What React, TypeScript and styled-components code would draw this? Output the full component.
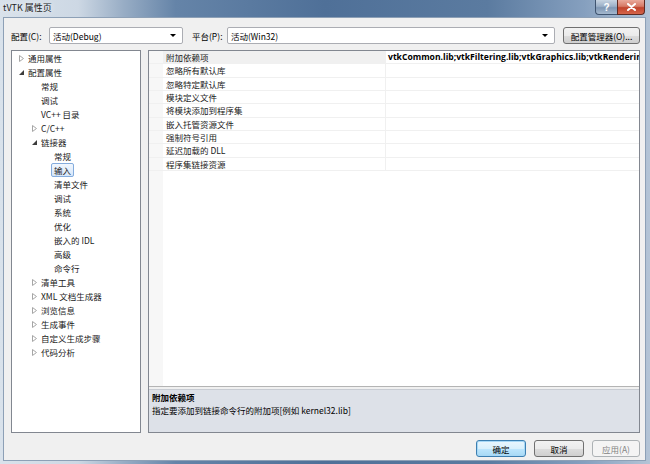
import React from "react";
import styled, { createGlobalStyle, css } from "styled-components";

const GlobalStyle = createGlobalStyle`
  html, body {
    margin: 0;
    padding: 0;
    background: #ffffff;
  }
  * {
    box-sizing: border-box;
  }
`;

const uiFont = `"Noto Sans CJK SC", "Noto Sans", sans-serif`;

type TreeItem = {
  label: string;
  level: number;
  arrow?: "collapsed" | "expanded";
  selected?: boolean;
};

const treeItems: TreeItem[] = [
  { label: "通用属性", level: 0, arrow: "collapsed" },
  { label: "配置属性", level: 0, arrow: "expanded" },
  { label: "常规", level: 1 },
  { label: "调试", level: 1 },
  { label: "VC++ 目录", level: 1 },
  { label: "C/C++", level: 1, arrow: "collapsed" },
  { label: "链接器", level: 1, arrow: "expanded" },
  { label: "常规", level: 2 },
  { label: "输入", level: 2, selected: true },
  { label: "清单文件", level: 2 },
  { label: "调试", level: 2 },
  { label: "系统", level: 2 },
  { label: "优化", level: 2 },
  { label: "嵌入的 IDL", level: 2 },
  { label: "高级", level: 2 },
  { label: "命令行", level: 2 },
  { label: "清单工具", level: 1, arrow: "collapsed" },
  { label: "XML 文档生成器", level: 1, arrow: "collapsed" },
  { label: "浏览信息", level: 1, arrow: "collapsed" },
  { label: "生成事件", level: 1, arrow: "collapsed" },
  { label: "自定义生成步骤", level: 1, arrow: "collapsed" },
  { label: "代码分析", level: 1, arrow: "collapsed" },
];

const properties = [
  { name: "附加依赖项", value: "vtkCommon.lib;vtkFiltering.lib;vtkGraphics.lib;vtkRendering.lib;vtkIO.lib" },
  { name: "忽略所有默认库", value: "" },
  { name: "忽略特定默认库", value: "" },
  { name: "模块定义文件", value: "" },
  { name: "将模块添加到程序集", value: "" },
  { name: "嵌入托管资源文件", value: "" },
  { name: "强制符号引用", value: "" },
  { name: "延迟加载的 DLL", value: "" },
  { name: "程序集链接资源", value: "" },
];

function App() {
  return (
    <>
      <GlobalStyle />
      <Window>
        <TitleBar>
          <TitleText>tVTK 属性页</TitleText>
          <CaptionButtons>
            <HelpButton>?</HelpButton>
            <CloseButton>
              <svg width="9" height="8" viewBox="0 0 9 8">
                <path d="M1 1 L8 7 M8 1 L1 7" stroke="#ffffff" strokeWidth="2" strokeLinecap="round" />
              </svg>
            </CloseButton>
          </CaptionButtons>
        </TitleBar>

        <Body>
          <Toolbar>
            <FieldLabel width={38}>配置(C):</FieldLabel>
            <Combo width={134}>
              <span>活动(Debug)</span>
              <ComboArrow />
            </Combo>
            <FieldLabel width={35} $gap={9}>平台(P):</FieldLabel>
            <Combo grow>
              <span>活动(Win32)</span>
              <ComboArrow />
            </Combo>
            <ToolButton>配置管理器(O)...</ToolButton>
          </Toolbar>

          <Main>
            <Tree>
              {treeItems.map((item, i) => (
                <TreeRow key={i} level={item.level}>
                  <ArrowBox>
                    {item.arrow === "collapsed" && (
                      <svg width="5" height="7" viewBox="0 0 5 7">
                        <path d="M0.5 0.5 L4.5 3.5 L0.5 6.5 Z" fill="none" stroke="#a6a6a6" strokeWidth="1" />
                      </svg>
                    )}
                    {item.arrow === "expanded" && (
                      <svg width="5" height="5" viewBox="0 0 5 5">
                        <path d="M5 0 L5 5 L0 5 Z" fill="#3c3c3c" />
                      </svg>
                    )}
                  </ArrowBox>
                  <TreeLabel selected={item.selected}>{item.label}</TreeLabel>
                </TreeRow>
              ))}
            </Tree>

            <PropertyPanel>
              <Grid>
                {properties.map((p, i) => (
                  <GridRow key={i}>
                    <Gutter />
                    <NameCell active={i === 0}>{p.name}</NameCell>
                    <ValueCell>{p.value}</ValueCell>
                  </GridRow>
                ))}
                <GridFill>
                  <Gutter />
                </GridFill>
              </Grid>
              <Splitter />
              <Description>
                <DescTitle>附加依赖项</DescTitle>
                <DescText>指定要添加到链接命令行的附加项[例如 kernel32.lib]</DescText>
              </Description>
            </PropertyPanel>
          </Main>

          <Footer>
            <DialogButton variant="default">确定</DialogButton>
            <DialogButton>取消</DialogButton>
            <DialogButton variant="disabled" width={48}>应用(A)</DialogButton>
          </Footer>
        </Body>
      </Window>
    </>
  );
}

export default App;

const Window = styled.div`
  width: 650px;
  height: 464px;
  display: flex;
  flex-direction: column;
  padding: 0 4px 3px 3px;
  background: linear-gradient(
    to right,
    #d9e2eb 0%,
    #cdd8e4 12%,
    #98adc5 19%,
    #6584a8 27%,
    #4f7098 50%,
    #5b7ba0 75%,
    #86a0bf 90%,
    #b4c4d6 100%
  );
  font-family: ${uiFont};
  overflow: hidden;
`;

const TitleBar = styled.div`
  height: 17px;
  flex-shrink: 0;
  display: flex;
  align-items: flex-start;
`;

const TitleText = styled.div`
  font-size: 9px;
  line-height: 16px;
  color: #1e1e1e;
  text-shadow: 0 0 6px rgba(255, 255, 255, 0.9);
`;

const CaptionButtons = styled.div`
  margin-left: auto;
  margin-right: 1px;
  display: flex;
`;

const captionBase = css`
  height: 15px;
  display: flex;
  align-items: center;
  justify-content: center;
  border: 1px solid #3f5470;
  border-top: none;
  color: #ffffff;
  font-size: 10px;
  font-weight: bold;
  font-family: "Liberation Sans", sans-serif;
`;

const HelpButton = styled.div`
  ${captionBase};
  width: 22px;
  border-right: none;
  border-bottom-left-radius: 4px;
  background: linear-gradient(#c6d3e1 0%, #9cb0c7 45%, #7f97b4 55%, #a4b8ce 100%);
`;

const CloseButton = styled.div`
  ${captionBase};
  width: 28px;
  border-color: #5e2a22;
  border-bottom-right-radius: 4px;
  background: linear-gradient(#e9a99b 0%, #d67a66 45%, #c0432c 55%, #d5654a 100%);
`;

const Body = styled.div`
  flex: 1;
  display: flex;
  flex-direction: column;
  background: #f0f0f0;
  border: 1px solid #8da0b6;
  padding: 9px 5px 3px 7px;
  min-height: 0;
`;

const Toolbar = styled.div`
  height: 17px;
  display: flex;
  align-items: center;
  flex-shrink: 0;
`;

const FieldLabel = styled.div<{ width: number; $gap?: number }>`
  width: ${({ width }) => width}px;
  margin-left: ${({ $gap }) => $gap || 0}px;
  flex-shrink: 0;
  font-size: 8.5px;
  color: #000000;
  white-space: nowrap;
`;

const Combo = styled.div<{ width?: number; grow?: boolean }>`
  width: ${({ width }) => (width ? `${width}px` : "auto")};
  flex: ${({ grow }) => (grow ? "1" : "none")};
  height: 17px;
  display: flex;
  align-items: center;
  padding: 0 6px 0 3px;
  background: #ffffff;
  border: 1px solid #abadb3;
  border-radius: 2px;
  font-size: 8.5px;
  color: #000000;
`;

const ComboArrow = styled.span`
  margin-left: auto;
  width: 0;
  height: 0;
  border-left: 3px solid transparent;
  border-right: 3px solid transparent;
  border-top: 3px solid #000000;
`;

const ToolButton = styled.div`
  width: 77px;
  height: 17px;
  margin-left: 8px;
  flex-shrink: 0;
  display: flex;
  align-items: center;
  justify-content: center;
  font-size: 8.5px;
  color: #000000;
  border: 1px solid #707070;
  border-radius: 3px;
  background: linear-gradient(#f2f2f2 0%, #ebebeb 50%, #dddddd 51%, #cfcfcf 100%);
  white-space: nowrap;
`;

const Main = styled.div`
  flex: 1;
  display: flex;
  gap: 7px;
  margin-top: 6px;
  min-height: 0;
`;

const Tree = styled.div`
  width: 130px;
  flex-shrink: 0;
  background: #ffffff;
  border: 1px solid #828790;
  overflow: hidden;
`;

const TreeRow = styled.div<{ level: number }>`
  height: 14px;
  display: flex;
  align-items: center;
  padding-left: ${({ level }) => 7 + level * 13}px;
`;

const ArrowBox = styled.span`
  width: 6px;
  height: 14px;
  display: flex;
  align-items: center;
  justify-content: flex-start;
  flex-shrink: 0;
`;

const TreeLabel = styled.span<{ selected?: boolean }>`
  font-size: 8.5px;
  line-height: 12px;
  height: 14px;
  padding: 0 2px;
  border: 1px solid transparent;
  border-radius: 2px;
  color: #1a1a1a;
  white-space: nowrap;
  ${({ selected }) =>
    selected &&
    css`
      border-color: #84acdd;
      background: linear-gradient(#f1f7fe 0%, #d5e6fa 100%);
    `}
`;

const PropertyPanel = styled.div`
  flex: 1;
  display: flex;
  flex-direction: column;
  border: 1px solid #828790;
  min-width: 0;
`;

const Grid = styled.div`
  flex: 1;
  display: flex;
  flex-direction: column;
  background: #ffffff;
  overflow: hidden;
`;

const GridRow = styled.div`
  height: 13.33px;
  display: flex;
  flex-shrink: 0;
  border-bottom: 1px solid #f0f0f0;
`;

const Gutter = styled.div`
  width: 14px;
  flex-shrink: 0;
  background: #f7f7f7;
`;

const NameCell = styled.div<{ active?: boolean }>`
  width: 223px;
  flex-shrink: 0;
  padding-left: 3px;
  font-size: 8.5px;
  line-height: 12.33px;
  color: #1a1a1a;
  border-right: 1px solid #f0f0f0;
  background: ${({ active }) => (active ? "#f0f0f0" : "#ffffff")};
  white-space: nowrap;
`;

const ValueCell = styled.div`
  flex: 1;
  min-width: 0;
  padding-left: 2px;
  font-family: "Open Sans", "Noto Sans", sans-serif;
  font-weight: bold;
  font-size: 8.6px;
  line-height: 12.33px;
  color: #000000;
  white-space: nowrap;
  overflow: hidden;
`;

const GridFill = styled.div`
  flex: 1;
  display: flex;
`;

const Splitter = styled.div`
  height: 3px;
  flex-shrink: 0;
  background: #f0f0f0;
  border-top: 1px solid #b4b4b4;
`;

const Description = styled.div`
  height: 43px;
  flex-shrink: 0;
  background: #dde1e8;
  border-top: 1px solid #c8ccd3;
  padding: 1px 3px;
`;

const DescTitle = styled.div`
  font-size: 8.5px;
  line-height: 13px;
  font-weight: bold;
  color: #000000;
`;

const DescText = styled.div`
  font-size: 8.5px;
  line-height: 13px;
  color: #000000;
  white-space: nowrap;
`;

const Footer = styled.div`
  height: 17px;
  margin-top: 7px;
  flex-shrink: 0;
  display: flex;
  justify-content: flex-end;
  gap: 8px;
`;

const DialogButton = styled.div<{ variant?: "default" | "disabled"; width?: number }>`
  width: ${({ width }) => width || 50}px;
  height: 17px;
  display: flex;
  align-items: center;
  justify-content: center;
  font-size: 8.5px;
  border-radius: 3px;
  color: #000000;
  border: 1px solid #707070;
  background: linear-gradient(#f2f2f2 0%, #ebebeb 50%, #dddddd 51%, #cfcfcf 100%);
  ${({ variant }) =>
    variant === "default" &&
    css`
      border-color: #3c7fb1;
      box-shadow: inset 0 0 0 1px #a7d8f6;
      background: linear-gradient(#eaf6fd 0%, #d9f0fc 50%, #bee6fd 51%, #a7d9f5 100%);
    `}
  ${({ variant }) =>
    variant === "disabled" &&
    css`
      border-color: #adb2b5;
      background: #f4f4f4;
      color: #838383;
    `}
`;
